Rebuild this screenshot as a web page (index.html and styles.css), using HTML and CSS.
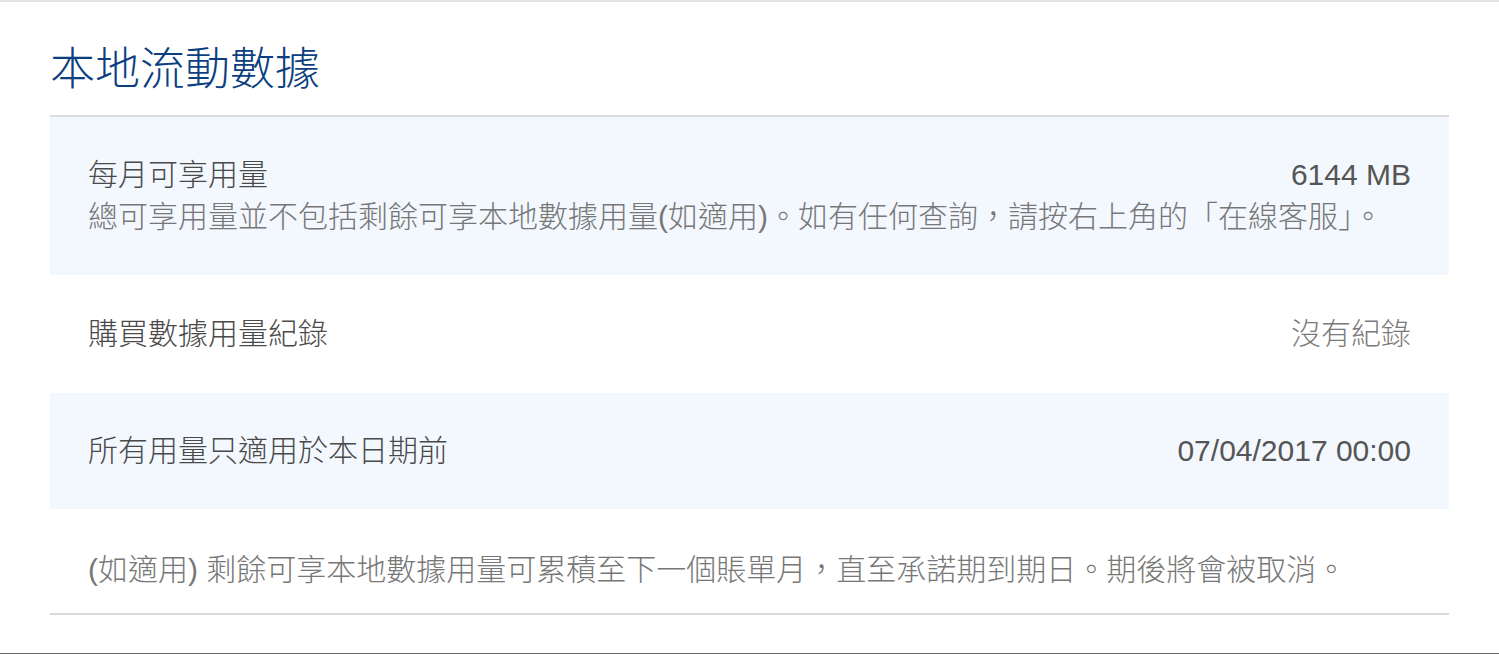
FILE: index.html
```html
<!DOCTYPE html>
<html lang="zh-Hant">
<head>
<meta charset="utf-8">
<title>本地流動數據</title>
<link rel="stylesheet" href="styles.css">
</head>
<body>
<div class="page">
  <section class="panel">
    <h1 class="panel-title">本地流動數據</h1>
    <div class="list">
      <div class="row row-shaded">
        <div class="row-main">
          <span class="label">每月可享用量</span>
          <span class="value value-dark">6144 MB</span>
        </div>
        <p class="note">總可享用量並不包括剩餘可享本地數據用量(如適用)。如有任何查詢，請按右上角的「在線客服」。</p>
      </div>
      <div class="row">
        <div class="row-main">
          <span class="label">購買數據用量紀錄</span>
          <span class="value">沒有紀錄</span>
        </div>
      </div>
      <div class="row row-shaded">
        <div class="row-main">
          <span class="label">所有用量只適用於本日期前</span>
          <span class="value value-dark">07/04/2017 00:00</span>
        </div>
      </div>
      <div class="row row-foot">
        <p class="note">(如適用) 剩餘可享本地數據用量可累積至下一個賬單月，直至承諾期到期日。期後將會被取消。</p>
      </div>
    </div>
  </section>
  <div class="page-end"></div>
</div>
</body>
</html>
```
FILE: styles.css
```css
* { box-sizing: border-box; }

html, body {
  margin: 0;
  padding: 0;
  background: #ffffff;
}

body {
  font-family: "Liberation Sans", "Noto Sans CJK TC", sans-serif;
  border-top: 2px solid #e2e2e2;
}

.page {
  width: 1499px;
}

.panel {
  padding: 0 50px;
}

.panel-title {
  margin: 0;
  padding: 45px 0 23px 0;
  font-size: 45px;
  line-height: 45px;
  font-weight: 300;
  color: #0c3f7f;
  border-bottom: 2px solid #d9dbde;
}

.list {
  display: flex;
  flex-direction: column;
  border-bottom: 2px solid #d9d9d9;
}

.row {
  padding: 38px 38px;
  font-size: 30px;
  line-height: 42px;
}

.row-shaded {
  background: #f3f8fe;
  padding-top: 37px;
  padding-bottom: 37px;
}

.row-main {
  display: flex;
  justify-content: space-between;
  align-items: center;
}

.label {
  color: #4a4a4a;
  font-weight: 300;
}

.value {
  color: #7a7a7a;
  font-weight: 300;
}

.value-dark {
  color: #555555;
  font-weight: 400;
}

.note {
  margin: 0;
  color: #777777;
  font-weight: 300;
}

.row-foot {
  padding: 40px 38px 22px 38px;
}

.page-end {
  margin-top: 38px;
  border-top: 1px solid #6a6a6a;
}
```
